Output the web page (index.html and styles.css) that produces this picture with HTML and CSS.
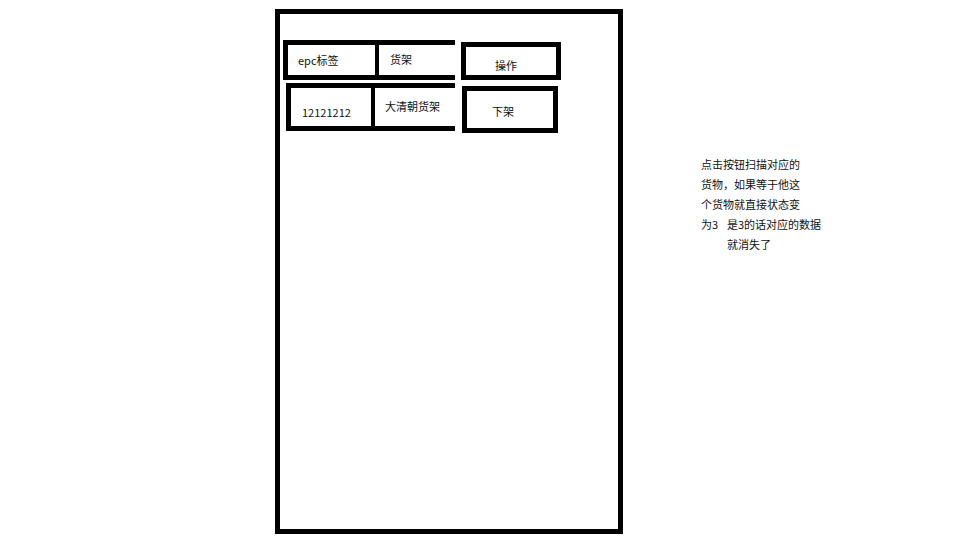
FILE: index.html
```html
<!DOCTYPE html>
<html lang="zh">
<head>
<meta charset="utf-8">
<title>下架</title>
<link rel="stylesheet" href="styles.css">
</head>
<body>
<div class="phone">
  <div class="row row-head">
    <div class="table-box head-box">
      <div class="cell cell-epc">epc标签</div>
      <div class="cell cell-shelf">货架</div>
    </div>
    <div class="action-box head-action">操作</div>
  </div>
  <div class="row row-data">
    <div class="table-box data-box">
      <div class="cell cell-epc">12121212</div>
      <div class="cell cell-shelf">大清朝货架</div>
    </div>
    <div class="action-box data-action">下架</div>
  </div>
</div>
<div class="note">
  <div class="line">点击按钮扫描对应的</div>
  <div class="line">货物，如果等于他这</div>
  <div class="line">个货物就直接状态变</div>
  <div class="line"><span class="w">为3</span><span>是3的话对应的数据</span></div>
  <div class="line indent">就消失了</div>
</div>
</body>
</html>
```
FILE: styles.css
```css
html, body {
  margin: 0;
  padding: 0;
  background: #ffffff;
}
body {
  width: 960px;
  height: 540px;
  display: flex;
  align-items: flex-start;
  font-family: "Noto Sans CJK SC", "Noto Sans", sans-serif;
  font-size: 11px;
  color: #111;
  overflow: hidden;
}
.phone {
  box-sizing: border-box;
  width: 348px;
  height: 525px;
  margin-left: 275px;
  margin-top: 9px;
  border: 5px solid #000;
  display: flex;
  flex-direction: column;
}
.row {
  display: flex;
  align-items: flex-start;
}
.row-head {
  margin-top: 26px;
  margin-left: 3px;
  gap: 6px;
}
.row-data {
  margin-top: 3px;
  margin-left: 6px;
  gap: 7px;
}
.table-box {
  box-sizing: border-box;
  border: 5px solid #000;
  border-right: none;
  display: flex;
}
.head-box {
  width: 172px;
  height: 40px;
}
.data-box {
  width: 169px;
  height: 48px;
}
.cell {
  display: flex;
  align-items: center;
  height: 100%;
  box-sizing: border-box;
  line-height: 14px;
}
.head-box .cell-epc {
  width: 87px;
  padding-left: 10px;
}
.head-box .cell-shelf {
  flex: 1;
  border-left: 4px solid #000;
  padding-left: 11px;
  padding-bottom: 2px;
}
.data-box .cell-epc {
  width: 80px;
  padding-left: 11px;
  padding-top: 9px;
}
.data-box .cell-shelf {
  flex: 1;
  border-left: 4px solid #000;
  padding-left: 10px;
  padding-bottom: 3px;
}
.action-box {
  box-sizing: border-box;
  border: 5px solid #000;
  display: flex;
  align-items: center;
  line-height: 14px;
}
.head-action {
  width: 100px;
  height: 38px;
  margin-top: 2px;
  padding-left: 29px;
  padding-top: 8px;
}
.data-action {
  width: 96px;
  height: 47px;
  margin-top: 3px;
  padding-left: 25px;
  padding-top: 3px;
}
.note {
  margin-left: 78px;
  margin-top: 154px;
  line-height: 20px;
  color: #111;
}
.line {
  white-space: nowrap;
}
.w {
  display: inline-block;
  width: 26px;
}
.indent {
  padding-left: 26px;
}
```
